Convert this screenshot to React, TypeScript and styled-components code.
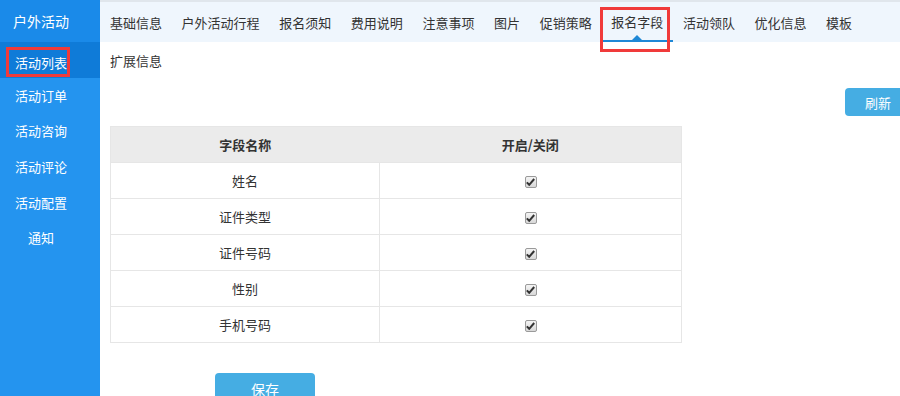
import React, { useState } from 'react';
import styled, { createGlobalStyle } from 'styled-components';

const GlobalStyle = createGlobalStyle`
  html, body {
    margin: 0;
    padding: 0;
    background: #fff;
    font-family: "Noto Sans CJK SC", "Noto Sans", sans-serif;
    font-size: 13px;
    color: #333;
  }
  * { box-sizing: border-box; }
`;

const menuItems = ['活动列表', '活动订单', '活动咨询', '活动评论', '活动配置', '通知'];
const tabs = ['基础信息', '户外活动行程', '报名须知', '费用说明', '注意事项', '图片', '促销策略', '报名字段', '活动领队', '优化信息', '模板'];
const fields = ['姓名', '证件类型', '证件号码', '性别', '手机号码'];

export default function App() {
  const [activeTab, setActiveTab] = useState('报名字段');
  const [checked, setChecked] = useState<boolean[]>(fields.map(() => true));

  const toggle = (i: number) => {
    setChecked(checked.map((v, j) => (j === i ? !v : v)));
  };

  return (
    <>
      <GlobalStyle />
      <Page>
        <Sidebar>
          <SideTitle>户外活动</SideTitle>
          {menuItems.map((item, i) => (
            <SideItem key={`menu-${item}`} isActive={i === 0}>
              <SideLabel marked={i === 0}>{item}</SideLabel>
            </SideItem>
          ))}
        </Sidebar>
        <Main>
          <TabBar>
            {tabs.map((tab) => (
              <Tab key={`tab-${tab}`} isActive={activeTab === tab} onClick={() => setActiveTab(tab)}>
                {tab}
              </Tab>
            ))}
          </TabBar>
          <Content>
            <SectionTitle>扩展信息</SectionTitle>
            <ToolRow>
              <RefreshButton>刷新</RefreshButton>
            </ToolRow>
            <Table>
              <thead>
                <tr>
                  <Th>字段名称</Th>
                  <Th>开启/关闭</Th>
                </tr>
              </thead>
              <tbody>
                {fields.map((f, i) => (
                  <tr key={`field-${f}`}>
                    <Td>{f}</Td>
                    <Td>
                      <CheckBox onClick={() => toggle(i)}>
                        {checked[i] && (
                          <svg width="9" height="8" viewBox="0 0 9 8">
                            <path d="M0.8 4.4 L3.2 6.8 L8.2 1" stroke="#333" strokeWidth="2" fill="none" />
                          </svg>
                        )}
                      </CheckBox>
                    </Td>
                  </tr>
                ))}
              </tbody>
            </Table>
            <SaveRow>
              <SaveButton>保存</SaveButton>
            </SaveRow>
          </Content>
        </Main>
      </Page>
    </>
  );
}

const Page = styled.div`
  display: flex;
  width: 900px;
  height: 396px;
  overflow: hidden;
`;
const Sidebar = styled.div`
  width: 100px;
  flex-shrink: 0;
  background-color: #2494ef;
  display: flex;
  flex-direction: column;
`;
const SideTitle = styled.div`
  flex-shrink: 0;
  height: 42px;
  line-height: 42px;
  padding-right: 18px;
  text-align: center;
  color: #fff;
  font-size: 14px;
  background-color: #1a8ae9;
`;
const SideItem = styled.div<{ isActive: boolean }>`
  flex-shrink: 0;
  height: 35.6px;
  display: flex;
  align-items: center;
  justify-content: center;
  padding-right: 18px;
  color: #fff;
  font-size: 13px;
  background-color: ${({ isActive }) => (isActive ? '#0f7bd8' : 'transparent')};
`;
const SideLabel = styled.span<{ marked: boolean }>`
  padding: ${({ marked }) => (marked ? '3px 0 2px 6px' : '0')};
  margin-left: ${({ marked }) => (marked ? '-6px' : '0')};
  margin-top: ${({ marked }) => (marked ? '4px' : '0')};
  border: 3px solid ${({ marked }) => (marked ? '#f03a3a' : 'transparent')};
`;
const Main = styled.div`
  flex: 1;
  display: flex;
  flex-direction: column;
  min-width: 0;
`;
const TabBar = styled.div`
  flex-shrink: 0;
  height: 42px;
  display: flex;
  align-items: stretch;
  background-color: #eff6fd;
  border-top: 2px solid #e0e6ec;
`;
const Tab = styled.div<{ isActive: boolean }>`
  position: relative;
  padding: 0 9.8px;
  display: flex;
  align-items: center;
  color: #333;
  white-space: nowrap;
  cursor: pointer;
  &:first-child { padding-left: 10px; }
  ${({ isActive }) =>
    isActive &&
    `
    border-bottom: 2px solid #1e88d6;
    &::after {
      content: '';
      position: absolute;
      left: 50%;
      bottom: 0;
      transform: translateX(-50%);
      border: 5px solid transparent;
      border-bottom-color: #1e88d6;
      border-top: 0;
    }
    &::before {
      content: '';
      position: absolute;
      left: -1px;
      top: 5px;
      right: 3px;
      bottom: -12px;
      border: 3px solid #f03a3a;
    }
  `}
`;
const Content = styled.div`
  flex-shrink: 0;
  padding: 0 10px;
  display: flex;
  flex-direction: column;
`;
const SectionTitle = styled.div`
  height: 38px;
  line-height: 38px;
`;
const ToolRow = styled.div`
  display: flex;
  justify-content: flex-end;
  margin-right: -15px;
  padding-top: 8px;
  height: 46px;
`;
const RefreshButton = styled.button`
  width: 60px;
  height: 28px;
  border: none;
  border-radius: 4px;
  background-color: #45ade3;
  color: #fff;
  font-family: inherit;
  font-size: 13px;
  text-align: left;
  padding-left: 20px;
`;
const Table = styled.table`
  width: 572px;
  border-collapse: collapse;
  table-layout: fixed;
  border: 1px solid #e6e6e6;
`;
const Th = styled.th`
  height: 36px;
  background-color: #ebebeb;
  font-weight: 600;
  color: #333;
  &:first-child { width: 269px; }
`;
const Td = styled.td`
  height: 36px;
  text-align: center;
  border: 1px solid #e6e6e6;
`;
const CheckBox = styled.span`
  display: inline-flex;
  align-items: center;
  justify-content: center;
  width: 12px;
  height: 12px;
  vertical-align: middle;
  border: 1px solid #9a9a9a;
  border-radius: 2px;
  background: linear-gradient(#f4f4f4, #d8d8d8);
  cursor: pointer;
`;
const SaveRow = styled.div`
  padding: 30px 0 0 105px;
`;
const SaveButton = styled.button`
  width: 100px;
  height: 32px;
  border: none;
  border-radius: 4px;
  background-color: #45ade3;
  color: #fff;
  font-family: inherit;
  font-size: 14px;
`;
